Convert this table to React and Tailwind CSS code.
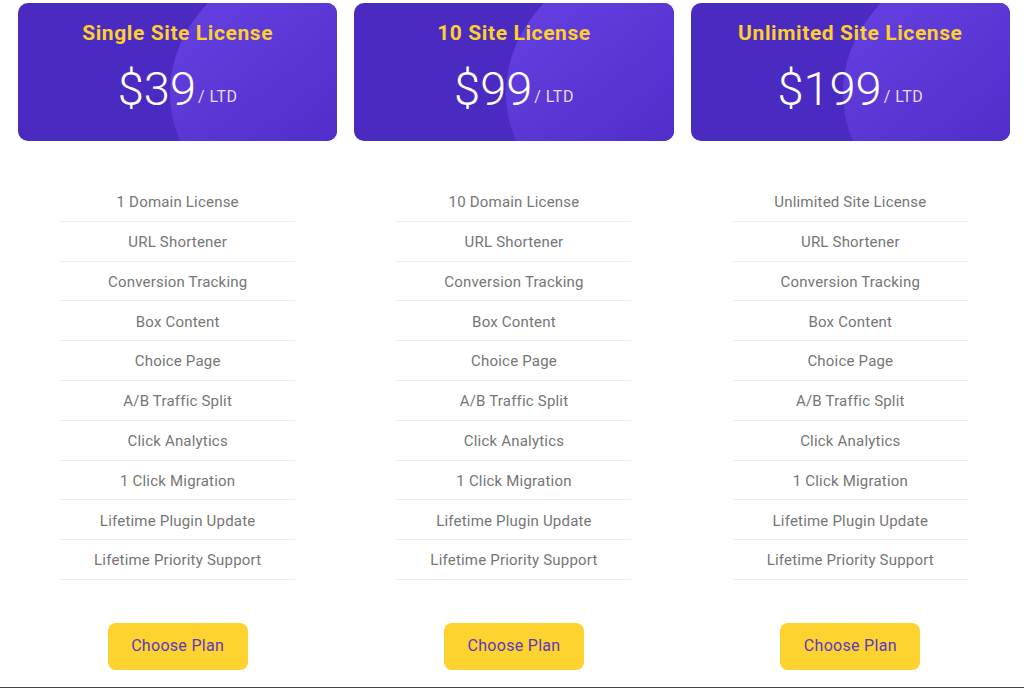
import React from "react";

const plans = [
  { title: "Single Site License", price: "$39", first: "1 Domain License" },
  { title: "10 Site License", price: "$99", first: "10 Domain License" },
  { title: "Unlimited Site License", price: "$199", first: "Unlimited Site License" },
];

const features = [
  "URL Shortener",
  "Conversion Tracking",
  "Box Content",
  "Choice Page",
  "A/B Traffic Split",
  "Click Analytics",
  "1 Click Migration",
  "Lifetime Plugin Update",
  "Lifetime Priority Support",
];

function PlanCard({ plan }) {
  return (
    <div className="flex flex-col items-center">
      {/* header */}
      <div className="relative w-full h-[138px] rounded-[10px] overflow-hidden bg-[#4a2ac0] flex flex-col items-center">
        <div className="absolute left-[152px] top-[-60px] w-[380px] h-[300px] rounded-[50%] bg-gradient-to-br from-[#6a44e8] via-[#5330cc] to-[#4a2ac0]" />
        <h3 className="relative mt-[15px] text-[21px] font-bold text-[#fdcf2f] tracking-[0.6px]">
          {plan.title}
        </h3>
        <div className="relative mt-[13px] flex items-end text-white">
          <span className="text-[47px] font-light leading-[52px]">{plan.price}</span>
          <span className="text-[16px] text-[#e4dcfb] mb-[6px] ml-[2px] tracking-[0.5px]">/ LTD</span>
        </div>
      </div>

      {/* features */}
      <ul className="mt-[41px] w-[235px]">
        {[plan.first, ...features].map((f) => (
          <li
            key={f}
            className="h-[39.8px] pt-[2px] flex items-center justify-center border-b border-[#ececec] text-[15px] text-[#767676] tracking-[0.2px]"
          >
            {f}
          </li>
        ))}
      </ul>

      <button className="mt-[43px] w-[140px] h-[47px] rounded-[8px] bg-[#fed22f] text-[#5a3bbf] text-[16px] tracking-[0.3px]">
        Choose Plan
      </button>
    </div>
  );
}

export default function App() {
  return (
    <div
      className="w-[1024px] h-[688px] bg-white border-b border-[#444] overflow-hidden"
      style={{ fontFamily: "Roboto, 'Liberation Sans', sans-serif" }}
    >
      <div className="grid grid-cols-3 gap-[17px] pl-[18px] pr-[14px] pt-[3px]">
        {plans.map((p) => (
          <PlanCard key={p.title} plan={p} />
        ))}
      </div>
    </div>
  );
}
